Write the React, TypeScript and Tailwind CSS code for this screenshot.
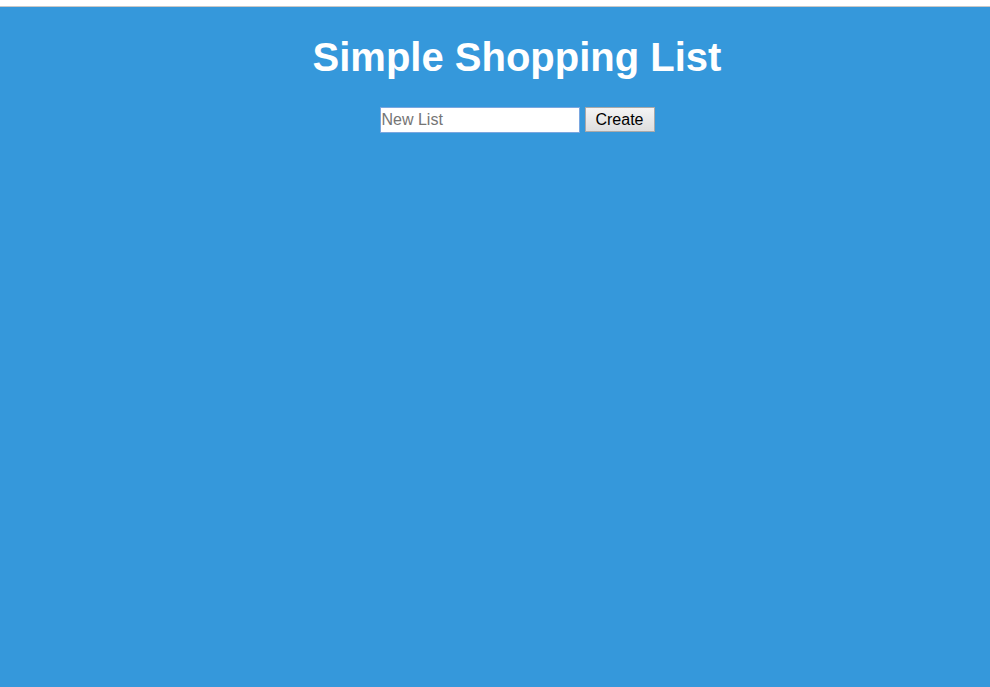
import React, { useState } from 'react';

const App: React.FC = () => {
  const [name, setName] = useState('');

  return (
    <div className="min-h-[687px] bg-white pt-[6px] font-['Liberation_Sans',Arial,sans-serif]">
      <div className="h-[681px] border-t border-[#c8c8c8] bg-[#3598db] pl-[44px]">
        <h1 className="pt-[26px] text-center text-[40px] font-bold leading-[48px] text-white">
          Simple Shopping List
        </h1>
        <form
          className="mt-[26px] flex justify-center gap-[5px]"
          onSubmit={(e) => e.preventDefault()}
        >
          <input
            autoFocus
            value={name}
            onChange={(e) => setName(e.target.value)}
            placeholder="New List"
            className="h-[26px] w-[200px] border border-[#7aa7e0] bg-white px-[1px] text-[16px] text-black outline-none placeholder:text-[#757575]"
          />
          <button
            type="submit"
            className="h-[25px] w-[70px] border border-[#a9a9a9] bg-gradient-to-b from-[#f4f4f4] to-[#dedede] text-[16px] text-black"
          >
            Create
          </button>
        </form>
      </div>
    </div>
  );
};

export default App;
